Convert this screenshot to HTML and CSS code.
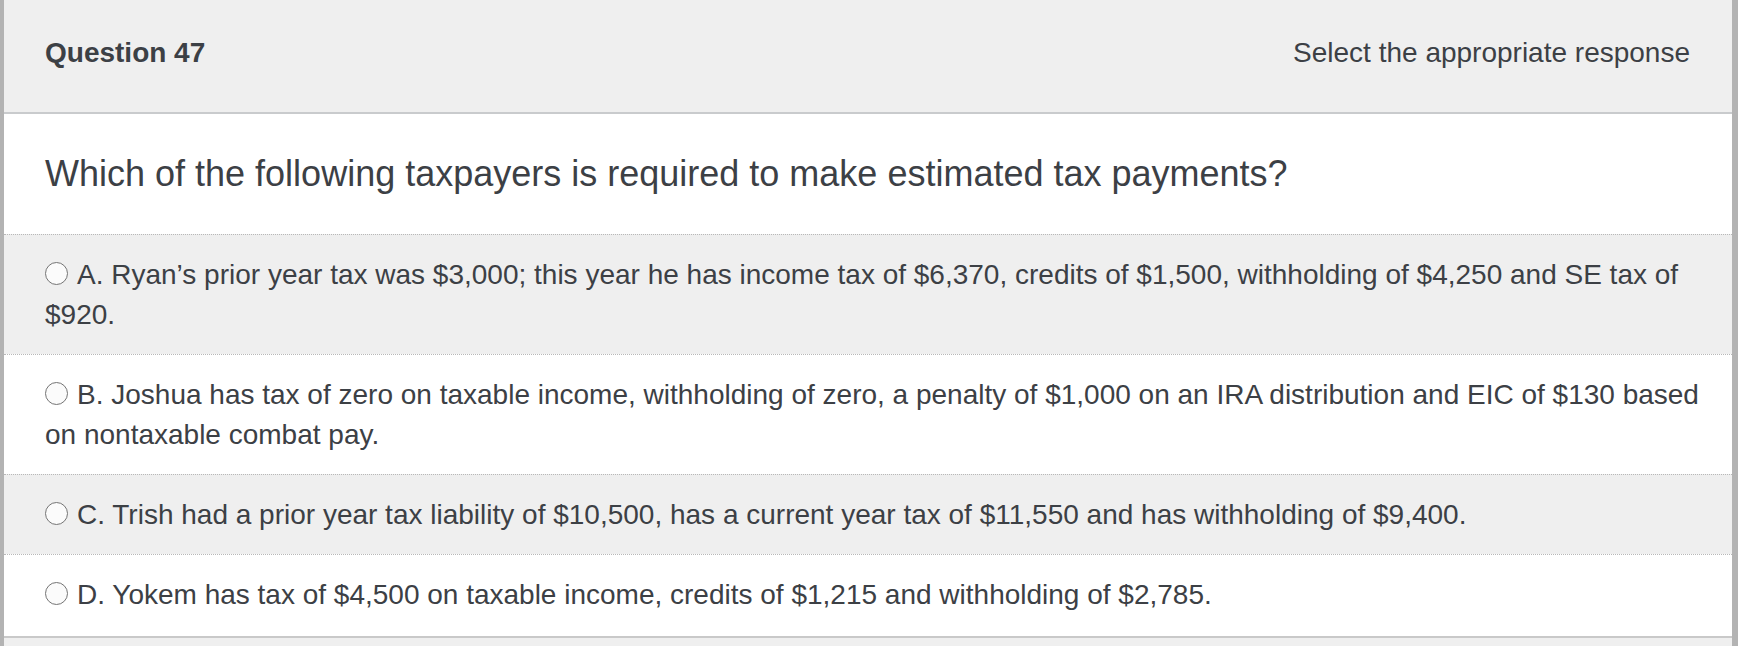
FILE: index.html
```html
<!DOCTYPE html>
<html lang="en">
<head>
<meta charset="utf-8">
<title>Question 47</title>
<link rel="stylesheet" href="styles.css">
</head>
<body>
<div class="panel">
  <div class="panel-head">
    <span class="q-num">Question 47</span>
    <span class="q-hint">Select the appropriate response</span>
  </div>
  <div class="q-text">Which of the following taxpayers is required to make estimated tax payments?</div>
  <ul class="options">
    <li class="option alt"><span class="radio"></span>A. Ryan’s prior year tax was $3,000; this year he has income tax of $6,370, credits of $1,500, withholding of $4,250 and SE tax of $920.</li>
    <li class="option"><span class="radio"></span>B. Joshua has tax of zero on taxable income, withholding of zero, a penalty of $1,000 on an IRA distribution and EIC of $130 based on nontaxable combat pay.</li>
    <li class="option alt"><span class="radio"></span>C. Trish had a prior year tax liability of $10,500, has a current year tax of $11,550 and has withholding of $9,400.</li>
    <li class="option last"><span class="radio"></span>D. Yokem has tax of $4,500 on taxable income, credits of $1,215 and withholding of $2,785.</li>
  </ul>
  <div class="panel-foot"></div>
</div>
</body>
</html>
```

FILE: styles.css
```css
html, body {
  margin: 0;
  padding: 0;
  background: #ffffff;
}
body {
  font-family: "Liberation Sans", Arial, Helvetica, sans-serif;
  color: #3c4045;
}
.panel {
  border-left: 4px solid #b3b3b3;
  border-right: 6px solid #b3b3b3;
  min-height: 646px;
  box-sizing: border-box;
  display: flex;
  flex-direction: column;
}
.panel-head {
  display: flex;
  justify-content: space-between;
  align-items: baseline;
  background: #efefef;
  border-bottom: 2px solid #c9cbcd;
  padding: 32px 42px 38px 41px;
  font-size: 28px;
  line-height: 42px;
}
.q-num {
  font-weight: bold;
}
.q-text {
  font-size: 36px;
  line-height: 54px;
  padding: 33px 41px 33px 41px;
}
.options {
  list-style: none;
  margin: 0;
  padding: 0;
}
.option {
  border-top: 1px dotted #b8b8b8;
  padding: 20px 14px 19px 41px;
  font-size: 28px;
  line-height: 40px;
  background: #ffffff;
}
.option.alt {
  background: #efefef;
}
.option.last {
  padding-bottom: 21px;
  border-bottom: 2px solid #c9c9c9;
}
.radio {
  display: inline-block;
  width: 21px;
  height: 21px;
  border: 1.5px solid #747474;
  border-radius: 50%;
  background: #fbfbfb;
  margin-right: 9px;
  vertical-align: -1px;
}
.panel-foot {
  flex: 1;
  background: #efefef;
}
```
